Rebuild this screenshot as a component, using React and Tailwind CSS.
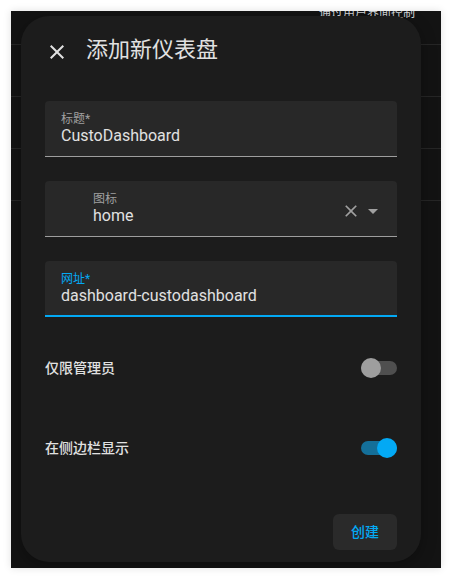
const font = { fontFamily: 'Roboto, "Noto Sans CJK SC", sans-serif' };

function CloseIcon({ className }) {
  return (
    <svg viewBox="0 0 24 24" className={className} fill="currentColor">
      <path d="M19,6.41L17.59,5L12,10.59L6.41,5L5,6.41L10.59,12L5,17.59L6.41,19L12,13.41L17.59,19L19,17.59L13.41,12L19,6.41Z" />
    </svg>
  );
}

function MenuDown({ className }) {
  return (
    <svg viewBox="0 0 24 24" className={className} fill="currentColor">
      <path d="M7,10L12,15L17,10H7Z" />
    </svg>
  );
}

function Field({ label, value, focused, inset, trailing }) {
  return (
    <div
      className={`relative h-14 rounded-t bg-[#282828] ${
        focused ? "border-b-2 border-[#03a9f4]" : "border-b border-[#9e9e9e]"
      } ${inset ? "pl-12" : "pl-4"} pt-[11px]`}
    >
      <div className={`text-xs leading-[14px] ${focused ? "text-[#03a9f4]" : "text-[#a0a0a0]"}`}>{label}</div>
      <div className="text-base leading-5 text-[#e1e1e1]">{value}</div>
      {trailing}
    </div>
  );
}

function Switch({ on }) {
  return (
    <div className="relative h-5 w-9">
      <div className={`absolute left-0 right-0 top-[3px] h-[14px] rounded-full ${on ? "bg-[#146f99]" : "bg-[#4f4f4f]"}`} />
      <div
        className={`absolute top-0 h-5 w-5 rounded-full ${on ? "right-0 bg-[#03a9f4]" : "left-0 bg-[#9e9e9e]"}`}
      />
    </div>
  );
}

export default function App() {
  return (
    <div className="h-[579px] w-[452px] bg-white p-[11px]" style={font}>
      <div className="relative h-[557px] w-[430px] overflow-hidden bg-[#131313] shadow-[0_0_8px_rgba(0,0,0,0.12)]">
        <div className="flex flex-col">
          <div className="h-[34px] border-b border-[#262626]" />
          <div className="h-[52px] border-b border-[#262626]" />
          <div className="h-[52px] border-b border-[#262626]" />
          <div className="h-[52px] border-b border-[#262626]" />
        </div>
        <div className="absolute right-[26px] top-[-6px] text-xs leading-4 text-[#d4d8dc]">通过用户界面控制</div>

        <div className="absolute left-[10px] top-[5px] flex h-[546px] w-[400px] flex-col rounded-[28px] bg-[#1c1c1c] px-6 pt-6 pb-3 shadow-[0_4px_16px_rgba(0,0,0,0.3)]">
          <div className="flex h-6 items-center">
            <CloseIcon className="h-6 w-6 text-[#e1e1e1]" />
            <div className="ml-[17px] -mt-1 text-[22px] leading-7 text-[#e1e1e1]">添加新仪表盘</div>
          </div>

          <div className="mt-[37px] flex flex-col gap-6">
            <Field label="标题*" value="CustoDashboard" />
            <Field
              label="图标"
              value="home"
              inset
              trailing={
                <div className="absolute right-3 top-[18px] flex items-center">
                  <CloseIcon className="h-5 w-5 text-[#a0a0a0]" />
                  <MenuDown className="h-6 w-6 text-[#a0a0a0]" />
                </div>
              }
            />
            <Field label="网址*" value="dashboard-custodashboard" focused />
          </div>

          <div className="mt-[11px] flex h-20 items-center justify-between">
            <span className="text-sm font-medium text-[#e1e1e1]">仅限管理员</span>
            <Switch />
          </div>
          <div className="flex h-20 items-center justify-between">
            <span className="text-sm font-medium text-[#e1e1e1]">在侧边栏显示</span>
            <Switch on />
          </div>

          <div className="mt-auto flex justify-end">
            <button
              type="button"
              className="h-9 w-16 rounded-md bg-[#2a2a2a] text-sm font-medium text-[#03a9f4]"
            >
              创建
            </button>
          </div>
        </div>
      </div>
    </div>
  );
}
